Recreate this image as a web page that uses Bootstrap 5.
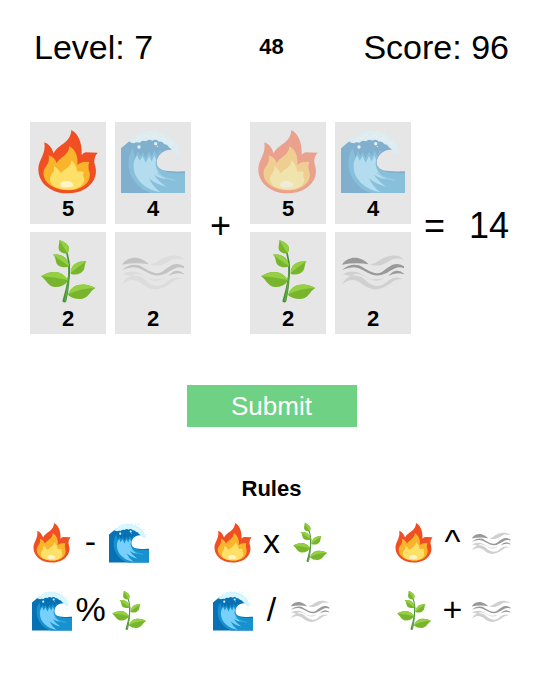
<!DOCTYPE html>
<html lang="en">
<head>
<meta charset="utf-8">
<meta name="viewport" content="width=device-width, initial-scale=1">
<title>Element Rules</title>
<link href="https://cdn.jsdelivr.net/npm/bootstrap@5.3.0/dist/css/bootstrap.min.css" rel="stylesheet">
<style>
body { font-family: "Liberation Sans", Arial, sans-serif; color: #000; background: #fff; }
.game { padding: 22px 34px 0; }
.stat { font-size: 34px; line-height: 50px; }
.timer, .rules-title { font-size: 22px; line-height: 28px; font-weight: 700; }
.equation { padding: 50px 34px 0 30px; }
.choices { display: grid; grid-template-columns: repeat(2, 76px); gap: 8px 9px; }
.tile { background: #e6e6e6; border: 0; padding: 7px 0 0; height: 102px; color: #000; font-size: 22px; line-height: 30px; font-weight: 700; }
.tile svg { display: block; width: 64px; height: 64px; margin: 0 auto; }
.tile.dim svg { opacity: .45; }
.symbol { font-size: 36px; line-height: 44px; }
.plus { width: 59px; }
.action { padding-top: 51px; }
.submit { background: #6ed183; color: #fff; width: 170px; height: 42px; font-size: 26px; line-height: 32px; border-radius: 0; }
.submit:hover { background: #5cc473; color: #fff; }
.rules-grid { padding-top: 20px; row-gap: 28px; }
.rule svg { width: 40px; height: 40px; }
.rule-op { width: 37px; font-size: 34px; line-height: 36px; text-align: center; }
</style>
<script src="https://cdn.jsdelivr.net/npm/bootstrap@5.3.0/dist/js/bootstrap.bundle.min.js"></script>
</head>
<body>
<svg width="0" height="0" class="d-none" aria-hidden="true">
  <symbol id="fire" viewBox="0 0 192 192">
    <path fill="#f04e23" d="M106 0C126 10 139 38 137 75Q143 68 149 67Q165 67 185 68Q173 81 175 98C179 112 182 122 178 138C169 171 135 190 94 190C47 190 8 161 7 119C6 91 31 74 25 37Q45 44 53 70C67 42 104 40 106 0Z"/>
    <path fill="#f9b42c" d="M100 49C120 59 127 83 124 105Q138 93 160 96Q154 112 161 129C166 162 130 182 94 181C50 180 18 155 23 124C26 108 43 103 38 76Q57 83 62 99C73 80 98 77 100 49Z"/>
    <path fill="#fee069" d="M106 91Q121 104 124 125Q134 122 144 126Q138 136 145 147C146 167 122 180 94 179C63 179 40 166 42 145C44 132 57 128 54 109Q68 116 74 130C85 116 106 113 106 91Z"/>
    <path fill="#fff4c7" d="M73 169C70 159 81 153 92 153C103 153 114 159 111 169Q105 173 92 172Q79 173 73 169Z"/>
  </symbol>
  <symbol id="wave" viewBox="0 0 192 192">
    <path fill="#0871b4" d="M0 55L26 33C67 7 135 13 157 60C133 55 107 73 107 99C108 124 140 125 192 124V189H0Z"/>
    <path fill="#1792ce" d="M58 38C31 50 20 76 23 109C26 150 63 184 91 189H192V130C145 130 116 125 108 105C104 80 111 70 130 60L116 60L109 76L99 59L92 78L84 64L74 83L66 65L57 77L51 61L43 82L44 57Z"/>
    <path fill="#0871b4" d="M40 40H140L132 59L122 66L116 60L109 76L99 59L92 78L84 64L74 83L66 65L57 77L51 61L43 82L36 60Z"/>
    <path fill="#77d0fb" d="M40 92L48 76L56 92L65 78L74 98L84 78L92 94L100 76L106 90C103 98 103 104 106 113C113 132 127 143 139 148Q119 147 99 134Q112 154 136 170Q105 164 84 145Q95 169 118 187C76 180 40 151 38 112Q37 100 40 92Z"/>
    <path fill="none" stroke="#42aee0" stroke-width="4" d="M108 128Q128 145 163 151"/>
    <path fill="#d2f5ff" d="M25 35Q29 22 43 24Q43 9 58 14Q61 1 75 7Q85-2 97 5Q110-1 117 10Q131 2 136 17Q148 14 149 28Q162 26 162 38Q173 42 168 51Q179 59 175 74L158 68Q152 56 143 51Q140 42 130 43Q124 32 114 35Q105 25 94 32Q84 25 75 34Q64 29 56 38Q45 35 39 40Q30 38 25 35Z"/>
    <g fill="none" stroke="#fff" stroke-width="3" opacity=".65"><path d="M48 29Q56 14 61 28M68 24Q79 8 85 24M92 22Q104 8 110 27M119 29Q132 17 134 34M139 38Q151 29 151 45"/></g>
    <g fill="#eafcff"><circle cx="54" cy="51" r="5"/><circle cx="104" cy="41" r="5"/><circle cx="109" cy="49" r="2"/></g>
    <g fill="#c6f1fd"><circle cx="31" cy="25" r="2"/><circle cx="54" cy="8" r="2"/><circle cx="126" cy="3" r="2"/><circle cx="142" cy="6" r="4"/><circle cx="169" cy="31" r="3"/><circle cx="179" cy="55" r="3"/><circle cx="167" cy="85" r="3"/><circle cx="154" cy="77" r="2"/></g>
  </symbol>
  <symbol id="plant" viewBox="0 0 192 192">
    <path fill="none" stroke="#47913a" stroke-width="5" stroke-linecap="round" d="M91 34C100 61 102 91 97 119"/>
    <path fill="#47913a" d="M92 59Q99 65 102 76Q102 139 91 184Q86 191 79 184Q90 148 96 110Q100 84 92 59Z"/>
    <path fill="#64ab42" d="M99 87Q100 139 89 183L85 182Q95 140 99 87Z"/>
    <path fill="#78b52d" d="M70 0C91 7 107 20 95 39Q86 43 76 37C61 28 71 16 70 0ZM51 44C77 40 96 52 100 79Q89 84 75 80C53 74 65 56 51 44ZM151 64C124 62 104 74 104 101Q118 107 134 99C150 91 143 76 151 64ZM15 109C44 90 79 90 96 122Q82 142 56 141C35 140 30 117 15 109ZM178 144C149 127 107 129 96 165Q109 177 131 177C158 177 160 154 178 144Z"/>
    <path fill="#95cf43" d="M70 0Q80 18 94 39C107 22 91 7 70 0ZM51 44Q73 61 99 78C95 52 77 40 51 44ZM151 64Q124 82 104 99C104 74 124 62 151 64ZM15 109Q56 111 96 121C79 90 44 90 15 109ZM178 144Q132 145 97 163C107 129 149 127 178 144Z"/>
  </symbol>
  <symbol id="wind" viewBox="0 0 192 192">
    <g fill="#d0d0d0">
      <path d="M86 72C110 72 119 50 150 47Q174 43 190 59Q163 51 146 62C119 80 105 79 86 72Z"/>
      <path d="M5 105Q18 93 40 95C66 97 78 122 105 118Q119 119 132 110Q111 130 84 117C54 99 43 100 34 107Q62 105 78 125C106 145 122 141 143 121Q164 106 186 117Q163 115 149 130C120 151 96 155 68 136C45 114 25 116 4 132Q14 113 29 109Q17 103 5 105Z"/>
    </g>
    <g fill="#999">
      <path d="M3 74C14 57 31 51 51 54Q69 58 83 73Q44 66 3 74Z"/>
      <path d="M3 90Q27 69 54 76C83 90 102 111 128 92C151 75 164 64 189 79V85C163 73 151 97 121 105C89 112 73 89 48 83Q29 79 3 90Z"/>
      <path d="M142 108Q166 80 189 101V103Q165 95 142 108Z"/>
    </g>
  </symbol>
</svg>
<main class="mx-auto">
  <header class="game row g-0 align-items-center">
    <div class="col-5 stat text-nowrap">Level: 7</div>
    <div class="col-2 timer text-center" aria-label="Time left">48</div>
    <div class="col-5 stat text-end text-nowrap">Score: 96</div>
  </header>
  <section class="equation d-flex justify-content-between align-items-center" aria-label="Equation">
    <div class="d-flex align-items-center">
      <div class="choices">
        <button type="button" class="tile"><svg aria-label="Fire"><use href="#fire"/></svg>5</button>
        <button type="button" class="tile dim"><svg aria-label="Water"><use href="#wave"/></svg>4</button>
        <button type="button" class="tile"><svg aria-label="Plant"><use href="#plant"/></svg>2</button>
        <button type="button" class="tile dim"><svg aria-label="Wind"><use href="#wind"/></svg>2</button>
      </div>
      <div class="symbol plus text-center pb-1">+</div>
      <div class="choices">
        <button type="button" class="tile dim"><svg aria-label="Fire"><use href="#fire"/></svg>5</button>
        <button type="button" class="tile dim"><svg aria-label="Water"><use href="#wave"/></svg>4</button>
        <button type="button" class="tile"><svg aria-label="Plant"><use href="#plant"/></svg>2</button>
        <button type="button" class="tile"><svg aria-label="Wind"><use href="#wind"/></svg>2</button>
      </div>
    </div>
    <div class="symbol d-flex gap-4 pb-1"><span>=</span><span>14</span></div>
  </section>
  <div class="action text-center"><button type="button" class="btn submit border-0 d-block mx-auto py-1">Submit</button></div>
  <section class="pt-5" aria-labelledby="rules">
    <h2 id="rules" class="rules-title text-center mb-0">Rules</h2>
    <div class="rules-grid row g-0 row-cols-3">
      <div class="col rule d-flex justify-content-center"><svg><use href="#fire"/></svg><span class="rule-op">-</span><svg><use href="#wave"/></svg></div>
      <div class="col rule d-flex justify-content-center"><svg><use href="#fire"/></svg><span class="rule-op">x</span><svg><use href="#plant"/></svg></div>
      <div class="col rule d-flex justify-content-center"><svg><use href="#fire"/></svg><span class="rule-op">^</span><svg><use href="#wind"/></svg></div>
      <div class="col rule d-flex justify-content-center"><svg><use href="#wave"/></svg><span class="rule-op">%</span><svg><use href="#plant"/></svg></div>
      <div class="col rule d-flex justify-content-center"><svg><use href="#wave"/></svg><span class="rule-op">/</span><svg><use href="#wind"/></svg></div>
      <div class="col rule d-flex justify-content-center"><svg><use href="#plant"/></svg><span class="rule-op">+</span><svg><use href="#wind"/></svg></div>
    </div>
  </section>
</main>
</body>
</html>
